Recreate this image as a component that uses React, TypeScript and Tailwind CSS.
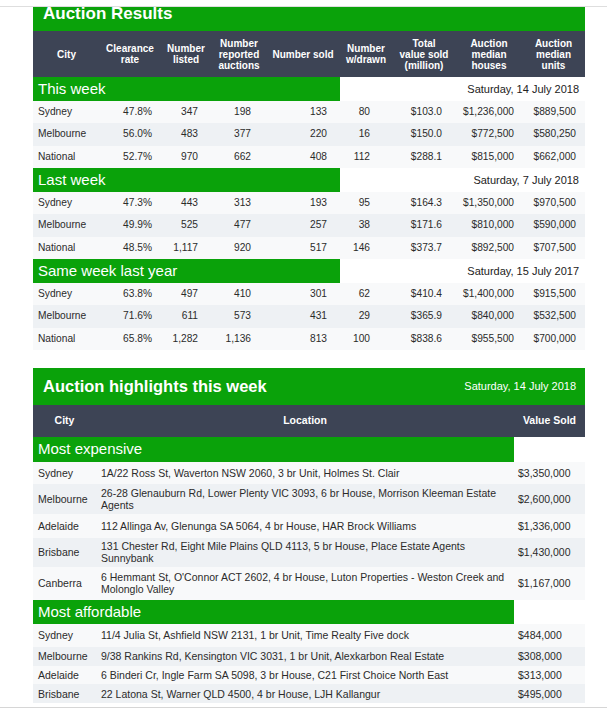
import React from 'react';

type ResultSection = {
  title: string;
  date: string;
  rows: string[][];
};

const resultSections: ResultSection[] = [
  {
    title: 'This week',
    date: 'Saturday, 14 July 2018',
    rows: [
      ['Sydney', '47.8%', '347', '198', '133', '80', '$103.0', '$1,236,000', '$889,500'],
      ['Melbourne', '56.0%', '483', '377', '220', '16', '$150.0', '$772,500', '$580,250'],
      ['National', '52.7%', '970', '662', '408', '112', '$288.1', '$815,000', '$662,000'],
    ],
  },
  {
    title: 'Last week',
    date: 'Saturday, 7 July 2018',
    rows: [
      ['Sydney', '47.3%', '443', '313', '193', '95', '$164.3', '$1,350,000', '$970,500'],
      ['Melbourne', '49.9%', '525', '477', '257', '38', '$171.6', '$810,000', '$590,000'],
      ['National', '48.5%', '1,117', '920', '517', '146', '$373.7', '$892,500', '$707,500'],
    ],
  },
  {
    title: 'Same week last year',
    date: 'Saturday, 15 July 2017',
    rows: [
      ['Sydney', '63.8%', '497', '410', '301', '62', '$410.4', '$1,400,000', '$915,500'],
      ['Melbourne', '71.6%', '611', '573', '431', '29', '$365.9', '$840,000', '$532,500'],
      ['National', '65.8%', '1,282', '1,136', '813', '100', '$838.6', '$955,500', '$700,000'],
    ],
  },
];

const resultHeaders: string[][] = [
  ['City'],
  ['Clearance', 'rate'],
  ['Number', 'listed'],
  ['Number', 'reported', 'auctions'],
  ['Number sold'],
  ['Number', 'w/drawn'],
  ['Total', 'value sold', '(million)'],
  ['Auction', 'median', 'houses'],
  ['Auction', 'median', 'units'],
];

const resultCols = ['w-[67px]', 'w-[60px]', 'w-[52px]', 'w-[54px]', 'w-[74px]', 'w-[52px]', 'w-[64px]', 'w-[66px]', 'w-[63px]'];

// data is right aligned inside each column, with uneven insets
const resultCellPad = [
  'pl-[5px] text-left',
  'pr-[8px] text-right',
  'pr-[14px] text-right',
  'pr-[15px] text-right',
  'pr-[13px] text-right',
  'pr-[22px] text-right',
  'pr-[14px] text-right',
  'pr-[8px] text-right',
  'pr-[9px] text-right',
];

type Highlight = { city: string; location: string; value: string; h: string };

const mostExpensive: Highlight[] = [
  { city: 'Sydney', location: '1A/22 Ross St, Waverton NSW 2060, 3 br Unit, Holmes St. Clair', value: '$3,350,000', h: 'h-[22px]' },
  {
    city: 'Melbourne',
    location: '26-28 Glenauburn Rd, Lower Plenty VIC 3093, 6 br House, Morrison Kleeman Estate Agents',
    value: '$2,600,000',
    h: 'h-[30px]',
  },
  { city: 'Adelaide', location: '112 Allinga Av, Glenunga SA 5064, 4 br House, HAR Brock Williams', value: '$1,336,000', h: 'h-[24px]' },
  {
    city: 'Brisbane',
    location: '131 Chester Rd, Eight Mile Plains QLD 4113, 5 br House, Place Estate Agents Sunnybank',
    value: '$1,430,000',
    h: 'h-[29px]',
  },
  {
    city: 'Canberra',
    location: "6 Hemmant St, O'Connor ACT 2602, 4 br House, Luton Properties - Weston Creek and Molonglo Valley",
    value: '$1,167,000',
    h: 'h-[33px]',
  },
];

const mostAffordable: Highlight[] = [
  { city: 'Sydney', location: '11/4 Julia St, Ashfield NSW 2131, 1 br Unit, Time Realty Five dock', value: '$484,000', h: 'h-[23px]' },
  { city: 'Melbourne', location: '9/38 Rankins Rd, Kensington VIC 3031, 1 br Unit, Alexkarbon Real Estate', value: '$308,000', h: 'h-[19px]' },
  { city: 'Adelaide', location: '6 Binderi Cr, Ingle Farm SA 5098, 3 br House, C21 First Choice North East', value: '$313,000', h: 'h-[18.5px]' },
  { city: 'Brisbane', location: '22 Latona St, Warner QLD 4500, 4 br House, LJH Kallangur', value: '$495,000', h: 'h-[18.5px]' },
];

function rowBg(i: number) {
  return i % 2 === 0 ? 'bg-[#f8f9fa]' : 'bg-[#eef1f4]';
}

function AuctionResults() {
  return (
    <div className="w-[552px]">
      <div className="h-[24px] overflow-hidden bg-[#0aa20a] pl-[10px]">
        <div className="-mt-[2px] text-[17px] leading-[17px] font-bold text-white">Auction Results</div>
      </div>
      <table className="w-[552px] table-fixed text-[10.2px] text-[#2b2b2b]">
        <colgroup>
          {resultCols.map((c, i) => (
            <col key={i} className={c} />
          ))}
        </colgroup>
        <thead>
          <tr className="h-[46px] bg-[#3d4455]">
            {resultHeaders.map((lines, i) => (
              <th key={i} className="px-[2px] text-center align-middle text-[10px] leading-[11px] font-bold text-white">
                {lines.map((l, j) => (
                  <div key={j}>{l}</div>
                ))}
              </th>
            ))}
          </tr>
        </thead>
        {resultSections.map((s) => (
          <tbody key={s.title}>
            <tr className="h-[24px]">
              <td colSpan={5} className="bg-[#0aa20a] pl-[5px] align-middle text-[15px] leading-[18px] text-white">
                {s.title}
              </td>
              <td colSpan={4} className="bg-white pr-[6px] text-right align-middle text-[11px] text-[#222]">
                {s.date}
              </td>
            </tr>
            {s.rows.map((r, i) => (
              <tr key={r[0]} className={`h-[22.33px] ${rowBg(i)}`}>
                {r.map((v, j) => (
                  <td key={j} className={`align-middle leading-[12px] ${resultCellPad[j]}`}>
                    {v}
                  </td>
                ))}
              </tr>
            ))}
          </tbody>
        ))}
      </table>
    </div>
  );
}

function HighlightRows({ title, items }: { title: string; items: Highlight[] }) {
  return (
    <tbody>
      <tr className={title === 'Most expensive' ? 'h-[25px]' : 'h-[24px]'}>
        <td colSpan={2} className="bg-[#0aa20a] pl-[5px] align-middle text-[15px] leading-[18px] text-white">
          {title}
        </td>
        <td className="bg-white" />
      </tr>
      {items.map((it, i) => (
        <tr key={it.city} className={`${it.h} ${rowBg(i)}`}>
          <td className="pl-[5px] align-middle leading-[12px]">{it.city}</td>
          <td className="pr-[4px] pl-[5px] align-middle leading-[12px]">{it.location}</td>
          <td className="pl-[4px] align-middle leading-[12px]">{it.value}</td>
        </tr>
      ))}
    </tbody>
  );
}

function AuctionHighlights() {
  return (
    <div className="w-[552px]">
      <div className="flex h-[37px] items-center justify-between bg-[#0aa20a] pr-[9px] pl-[10px]">
        <span className="text-[16.5px] font-bold text-white">Auction highlights this week</span>
        <span className="text-[11px] text-white">Saturday, 14 July 2018</span>
      </div>
      <table className="w-[552px] table-fixed text-[10.5px] text-[#2b2b2b]">
        <colgroup>
          <col className="w-[63px]" />
          <col className="w-[418px]" />
          <col className="w-[71px]" />
        </colgroup>
        <thead>
          <tr className="h-[32px] bg-[#3d4455] text-[10.5px] font-bold text-white">
            <th className="text-center align-middle">City</th>
            <th className="text-center align-middle">Location</th>
            <th className="text-center align-middle">Value Sold</th>
          </tr>
        </thead>
        <HighlightRows title="Most expensive" items={mostExpensive} />
        <HighlightRows title="Most affordable" items={mostAffordable} />
      </table>
    </div>
  );
}

export default function App() {
  return (
    <div className="min-h-[711px] bg-white font-['Liberation_Sans',Arial,sans-serif]">
      <div className="h-[6px]" />
      <div className="h-px bg-[#dedede]" />
      <div className="pl-[33px]">
        <AuctionResults />
        <div className="h-[18px]" />
        <AuctionHighlights />
      </div>
      <div className="h-[4px]" />
      <div className="h-px bg-[#d6d6d6]" />
    </div>
  );
}
